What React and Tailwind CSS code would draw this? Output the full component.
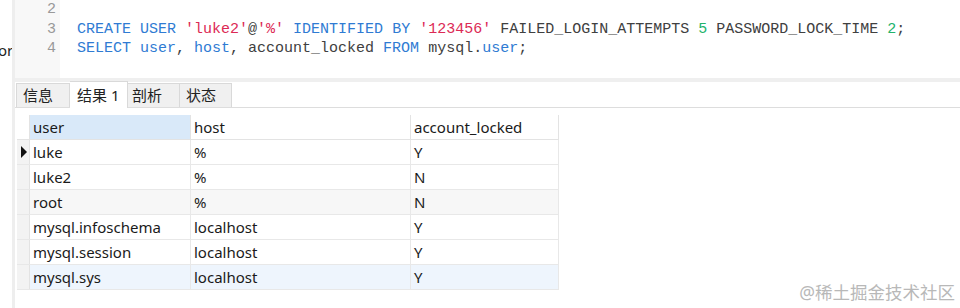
import React from "react";

const K = ({ children }) => <span className="text-[#2f7bd3]">{children}</span>;
const S = ({ children }) => <span className="text-[#dc2a55]">{children}</span>;
const N = ({ children }) => <span className="text-[#22b36b]">{children}</span>;

const rows = [
  ["luke", "%", "Y"],
  ["luke2", "%", "N"],
  ["root", "%", "N"],
  ["mysql.infoschema", "localhost", "Y"],
  ["mysql.session", "localhost", "Y"],
  ["mysql.sys", "localhost", "Y"],
];

export default function App() {
  const sans = { fontFamily: '"Noto Sans", "Noto Sans CJK SC", sans-serif' };
  return (
    <div className="w-[960px] h-[308px] bg-white flex overflow-hidden relative" style={sans}>
      <div className="w-[12px] shrink-0 overflow-hidden">
        <div className="mt-[40px] text-[15px] leading-[20px] text-[#222] -ml-[2px]">or</div>
      </div>
      <div className="w-[3px] shrink-0 bg-[#eeeeee]" />
      <div className="flex-1 flex flex-col">
        <div className="h-[78px] flex" style={{ fontFamily: '"Liberation Mono", monospace' }}>
          <div className="w-[45px] bg-[#f8f8f8] text-[#999] text-[15px] leading-[19.5px] text-right pr-[4px]">
            <div>2</div>
            <div>3</div>
            <div>4</div>
          </div>
          <div className="flex-1 pl-[17px] text-[15px] leading-[19.5px] text-[#404040] whitespace-pre">
            <div>&nbsp;</div>
            <div>
              <K>CREATE USER</K> <S>'luke2'</S>@<S>'%'</S> <K>IDENTIFIED BY</K> <S>'123456'</S> FAILED_LOGIN_ATTEMPTS <N>5</N> PASSWORD_LOCK_TIME <N>2</N>;
            </div>
            <div>
              <K>SELECT</K> <K>user</K>, <K>host</K>, account_locked <K>FROM</K> mysql.<K>user</K>;
            </div>
          </div>
        </div>
        <div className="h-[4px] bg-[#efefef]" />
        <div className="h-[26px] flex items-end border-b border-[#dddddd] bg-white">
          <div className="ml-[1px] w-[54px] h-[24px] bg-[#f0f0f0] border border-b-0 border-[#d9d9d9] flex items-center pl-[6px] text-[15px] text-[#222]">信息</div>
          <div className="w-[58px] h-[27px] -mb-[1px] bg-white border-t border-r border-[#d9d9d9] flex items-center pl-[7px] text-[15px] text-[#222]">结果 1</div>
          <div className="w-[52px] h-[24px] bg-[#f0f0f0] border border-l-0 border-b-0 border-[#d9d9d9] flex items-center pl-[4px] text-[15px] text-[#222]">剖析</div>
          <div className="w-[52px] h-[24px] bg-[#f0f0f0] border border-l-0 border-b-0 border-[#d9d9d9] flex items-center pl-[6px] text-[15px] text-[#222]">状态</div>
        </div>
        <div className="flex-1 pt-[7px] pl-[2px]">
          <div className="flex flex-col w-[542px] text-[15px] text-[#1a1a1a]">
            <div className="flex h-[25px] border-b border-[#e3e3e3]">
              <div className="w-[13px] shrink-0 border-r border-[#e3e3e3]" />
              <div className="w-[161px] shrink-0 bg-[#d9e9f9] pl-[3px] leading-[25px] border-r border-[#e3e3e3]">user</div>
              <div className="w-[220px] shrink-0 pl-[3px] leading-[25px] border-r border-[#e3e3e3]">host</div>
              <div className="w-[148px] shrink-0 pl-[3px] leading-[25px] border-r border-[#e3e3e3]">account_locked</div>
            </div>
            {rows.map((r, i) => {
              const bg = i === 2 ? "bg-[#f7f7f7]" : i === 5 ? "bg-[#eef5fd]" : "bg-white";
              return (
                <div key={i} className={`flex h-[25px] border-b border-[#e8e8e8] ${bg}`}>
                  <div className="w-[13px] shrink-0 bg-[#f3f3f3] border-r border-[#e3e3e3] flex items-center justify-center">
                    {i === 0 && (
                      <svg width="7" height="12" viewBox="0 0 7 12">
                        <path d="M1 0 L7 6 L1 12 Z" fill="#111" />
                      </svg>
                    )}
                  </div>
                  <div className="w-[161px] shrink-0 pl-[3px] leading-[25px] border-r border-[#e8e8e8]">{r[0]}</div>
                  <div className="w-[220px] shrink-0 pl-[3px] leading-[25px] border-r border-[#e8e8e8]">{r[1]}</div>
                  <div className="w-[148px] shrink-0 pl-[3px] leading-[25px] border-r border-[#e8e8e8]">{r[2]}</div>
                </div>
              );
            })}
          </div>
        </div>
      </div>
      <div className="absolute right-[5px] bottom-[6px] text-[17.5px] leading-[20px] text-[#b8b8b8]">@稀土掘金技术社区</div>
    </div>
  );
}
